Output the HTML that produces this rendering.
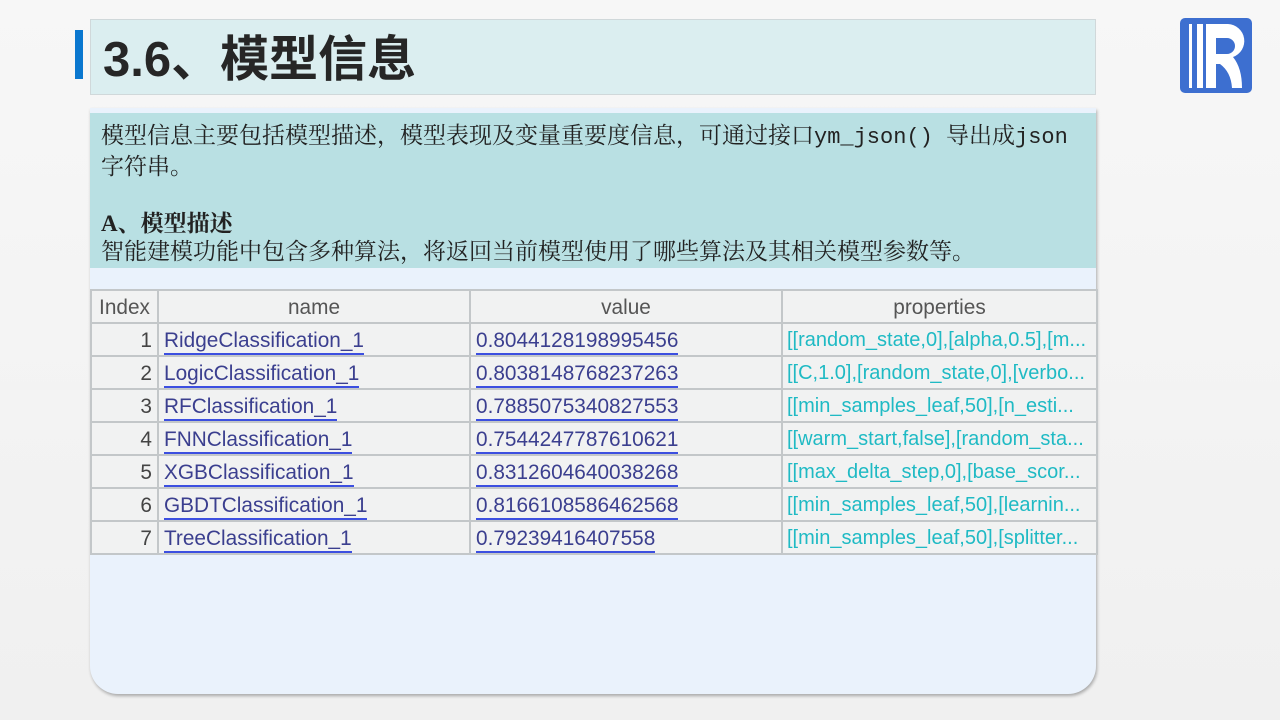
<!DOCTYPE html>
<html><head><meta charset="utf-8"><style>
*{margin:0;padding:0;box-sizing:border-box}
body{width:1280px;height:720px;overflow:hidden;background:linear-gradient(#f7f7f7,#f0f0f0);position:relative;font-family:"Liberation Sans","Noto Sans CJK SC",sans-serif}
.bar{position:absolute;left:75px;top:30px;width:8px;height:49px;background:#0a77cf}
.title{position:absolute;left:90px;top:19px;width:1006px;height:76px;background:#dbeef0;border:1px solid #d0d8da}
.title span{position:absolute;left:12px;top:0px;font-size:49px;font-weight:bold;color:#262626;font-family:"Liberation Sans","Noto Sans CJK SC",sans-serif}
.card{position:absolute;left:90px;top:108px;width:1006px;height:586px;background:#eaf2fc;border-radius:0 0 28px 28px;box-shadow:1px 2px 3px rgba(0,0,0,.3)}
.txt{position:absolute;left:0;top:5px;width:1006px;height:155px;background:#b9e0e3;padding:9px 0 0 11px;font-family:"Liberation Serif","Noto Serif CJK SC",serif;font-size:23px;line-height:28.5px;color:#222}
.m{font-family:"Liberation Mono",monospace;font-size:22px}
table{position:absolute;left:0;top:181px;width:1006px;border-collapse:collapse;background:#f1f2f2;font-size:20.8px;color:#444;table-layout:fixed}
td,th{border:2px solid #c3c7c9;height:33px;padding:2px 5px 0;white-space:nowrap;overflow:hidden}
th{font-weight:normal;color:#555;background:#f1f2f2}
td.i{text-align:right}
td.n span,td.v span{color:#3b3f8f;border-bottom:2px solid #3c4fe0;padding-bottom:1px}
td.p{color:#1fbac4;font-size:20px;padding-left:4px}
</style></head><body>
<div class="bar"></div>
<div class="title"><span>3.6、模型信息</span></div>
<svg style="position:absolute;left:1180px;top:18px" width="72" height="75" viewBox="0 0 72 75">
<rect width="72" height="75" rx="5" fill="#3d6fd0"/>
<rect x="9" y="6" width="3" height="64" fill="#fff"/>
<rect x="17" y="6" width="6" height="64" fill="#fff"/>
<path d="M26 6 H48 A17 17 0 0 1 53 39 Q62 50 62 70 H52 Q51 54 40 46 H36 V36 H47 A8 8 0 0 0 47 20 H36 V70 H26 Z" fill="#fff"/>
</svg>
<div class="card">
<div class="txt">模型信息主要包括模型描述，模型表现及变量重要度信息，可通过接口<span class="m">ym_json() </span>导出成<span class="m">json</span><br>字符串。<br><br><b>A、模型描述</b><br>智能建模功能中包含多种算法，将返回当前模型使用了哪些算法及其相关模型参数等。</div>
<table>
<colgroup><col style="width:67px"><col style="width:312px"><col style="width:312px"><col style="width:315px"></colgroup>
<tr><th>Index</th><th>name</th><th>value</th><th>properties</th></tr>
<tr><td class="i">1</td><td class="n"><span>RidgeClassification_1</span></td><td class="v"><span>0.8044128198995456</span></td><td class="p">[[random_state,0],[alpha,0.5],[m...</td></tr>
<tr><td class="i">2</td><td class="n"><span>LogicClassification_1</span></td><td class="v"><span>0.8038148768237263</span></td><td class="p">[[C,1.0],[random_state,0],[verbo...</td></tr>
<tr><td class="i">3</td><td class="n"><span>RFClassification_1</span></td><td class="v"><span>0.7885075340827553</span></td><td class="p">[[min_samples_leaf,50],[n_esti...</td></tr>
<tr><td class="i">4</td><td class="n"><span>FNNClassification_1</span></td><td class="v"><span>0.7544247787610621</span></td><td class="p">[[warm_start,false],[random_sta...</td></tr>
<tr><td class="i">5</td><td class="n"><span>XGBClassification_1</span></td><td class="v"><span>0.8312604640038268</span></td><td class="p">[[max_delta_step,0],[base_scor...</td></tr>
<tr><td class="i">6</td><td class="n"><span>GBDTClassification_1</span></td><td class="v"><span>0.8166108586462568</span></td><td class="p">[[min_samples_leaf,50],[learnin...</td></tr>
<tr><td class="i">7</td><td class="n"><span>TreeClassification_1</span></td><td class="v"><span>0.79239416407558</span></td><td class="p">[[min_samples_leaf,50],[splitter...</td></tr>
</table>
</div>
</body></html>
